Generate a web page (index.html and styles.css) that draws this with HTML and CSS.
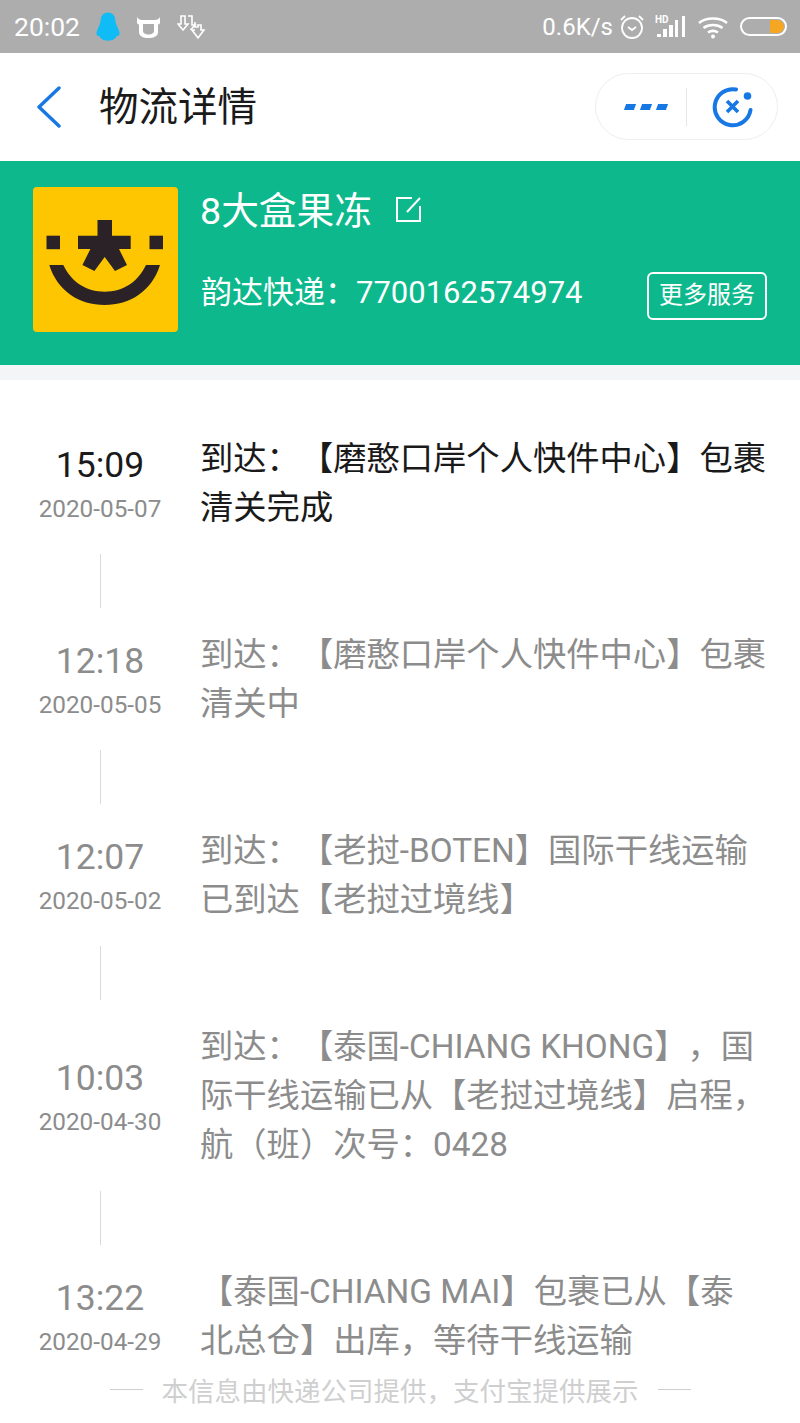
FILE: index.html
```html
<!DOCTYPE html>
<html lang="zh-CN">
<head>
  <meta charset="UTF-8" />
  <meta name="viewport" content="width=device-width, initial-scale=1.0" />
  <title>物流详情</title>
  <link rel="stylesheet" href="styles.css">
</head>
<body>
  <div class="status-bar">
    <div class="status-left">
      <span class="clock">20:02</span>
      <svg class="icon-qq" width="26" height="32" viewBox="0 0 26 32"><path d="M13 1.500c-5 0-7.500 4-7.500 9 0 3-4 8-4 12 0 2 1 3 2.500 2 .5 2 2 3 3.500 4 2 1.500 9 1.500 11 0 1.500-1 3-2 3.500-4 1.500 1 2.500 0 2.500-2 0-4-4-9-4-12 0-5-2.500-9-7.500-9z" fill="#10bcf5"/></svg>
      <svg class="icon-cow" width="26" height="26" viewBox="0 0 26 26"><path d="M1 3c1 2 3 3 5 3h13c2 0 4-1 5-3v6c-.5 1-1.500 1.500-2 1.500V18c0 4-4 6-9.500 6S3 22 3 18v-7.500C2.500 10.500 1.500 10 1 9z" fill="#fff"/><path d="M7 10h11v7c0 2-2.500 3.500-5.500 3.500S7 19 7 17z" fill="#adadad"/></svg>
      <svg class="icon-down" width="28" height="26" viewBox="0 0 28 26" fill="none" stroke="#fff" stroke-width="1.600"><path d="M4 2h4v8h3l-5 6-5-6h3zM11 2h4v9h3l-4.500 5"/><path d="M18 8v5h3v-2h3v5h3l-6 8-6-8h3"/></svg>
    </div>
    <div class="status-right">
      <span class="speed">0.6K/s</span>
      <svg width="26" height="26" viewBox="0 0 26 26" fill="none" stroke="#fff" stroke-width="1.800"><circle cx="13" cy="14" r="10"/><path d="M9 13l4 3 4-3"/><path d="M2 6l4-4M24 6l-4-4"/></svg>
      <svg width="32" height="26" viewBox="0 0 32 26"><text x="0" y="9" class="hd">HD</text><rect x="2" y="20" width="4" height="3" fill="#fff"/><rect x="8" y="15" width="4" height="8" fill="#fff"/><rect x="14" y="11" width="4" height="12" fill="#fff"/><rect x="20" y="6" width="3" height="17" fill="#fff"/><rect x="27" y="2" width="3" height="21" fill="#fff"/></svg>
      <svg width="32" height="26" viewBox="0 0 32 26" fill="none" stroke="#fff" stroke-width="2.600"><path d="M2 9c7-6 21-6 28 0M6.500 14c5-4 14-4 19 0M11 18.500c3-2 7-2 10 0"/><circle cx="16" cy="22.500" r="2" fill="#fff" stroke="none"/></svg>
      <span class="battery"><span class="battery-level"></span></span>
    </div>
  </div>

  <header class="nav-bar">
    <svg class="back" width="26" height="44" viewBox="0 0 26 44" fill="none" stroke="#1677e5" stroke-width="3.400" stroke-linecap="round" stroke-linejoin="round"><path d="M24 3L4 22l20 19"/></svg>
    <h1 class="nav-title">物流详情</h1>
    <div class="capsule">
      <div class="capsule-more"><i></i><i></i><i></i></div>
      <svg class="capsule-close" width="42" height="42" viewBox="0 0 42 42" fill="none" stroke="#1677e5"><path d="M24 3.500A18 18 0 1 0 38.500 24" stroke-width="4" stroke-linecap="round"/><path d="M15 15l11 11M26 15L15 26" stroke-width="3.600"/><circle cx="35.500" cy="10" r="3.800" fill="#1677e5" stroke="none"/></svg>
    </div>
  </header>

  <section class="summary">
    <svg class="logo" width="145" height="145" viewBox="0 0 145 145">
      <rect width="145" height="145" rx="4" fill="#fdc600"/>
      <rect x="13.500" y="48.700" width="13.500" height="13.500" fill="#2a2227"/>
      <rect x="116.500" y="48.700" width="13.500" height="13.500" fill="#2a2227"/>
      <path d="M64.500 33H79v15.700H97.700V62H86l8 16-12 6-10.300-14-10.300 14-12-6 8-16H45V48.700h19.500z" fill="#2a2227"/>
      <path d="M16.300 78h14c8 17 23 26.700 41.400 26.700S105 95 113 78h14c-8 26-30 40-55.300 40S24.300 104 16.300 78z" fill="#2a2227"/>
    </svg>
    <div class="summary-info">
      <div class="goods">
        <span>8大盒果冻</span>
        <svg class="edit" width="28" height="28" viewBox="0 0 28 28" fill="none" stroke="#fff" stroke-width="2"><path d="M17 3H2v23h23V11"/><path d="M12 17L25 3"/></svg>
      </div>
      <div class="waybill">
        <span>韵达快递：7700162574974</span>
        <span class="more-btn">更多服务</span>
      </div>
    </div>
  </section>

  <div class="divider"></div>

  <main class="timeline">
    <div class="event current">
      <div class="when"><div class="time">15:09</div><div class="date">2020-05-07</div></div>
      <div class="what">到达：【磨憨口岸个人快件中心】包裹清关完成</div>
    </div>
    <div class="link"></div>
    <div class="event">
      <div class="when"><div class="time">12:18</div><div class="date">2020-05-05</div></div>
      <div class="what">到达：【磨憨口岸个人快件中心】包裹清关中</div>
    </div>
    <div class="link"></div>
    <div class="event">
      <div class="when"><div class="time">12:07</div><div class="date">2020-05-02</div></div>
      <div class="what">到达：【老挝-BOTEN】国际干线运输已到达【老挝过境线】</div>
    </div>
    <div class="link"></div>
    <div class="event">
      <div class="when"><div class="time">10:03</div><div class="date">2020-04-30</div></div>
      <div class="what">到达：【泰国-CHIANG KHONG】，国际干线运输已从【老挝过境线】启程，航（班）次号：0428</div>
    </div>
    <div class="link"></div>
    <div class="event">
      <div class="when"><div class="time">13:22</div><div class="date">2020-04-29</div></div>
      <div class="what">【泰国-CHIANG MAI】包裹已从【泰<br>北总仓】出库，等待干线运输</div>
    </div>
  </main>

  <footer class="source">
    <span class="dash"></span>
    <span>本信息由快递公司提供，支付宝提供展示</span>
    <span class="dash"></span>
  </footer>
</body>
</html>
```

FILE: styles.css
```css
* {
  margin: 0;
  padding: 0;
  box-sizing: border-box;
}

body {
  position: relative;
  height: 1423px;
  overflow: hidden;
  background: #fff;
  color: #1a1a1a;
  font-family: Roboto, "Noto Sans CJK SC", sans-serif;
  text-spacing-trim: space-all;
}

/* status bar */
.status-bar {
  height: 53px;
  background: #adadad;
  color: #fff;
  display: flex;
  align-items: center;
  justify-content: space-between;
  padding: 0 13px 0 14px;
}

.status-left, .status-right {
  display: flex;
  align-items: center;
}

.clock {
  font-size: 26.500px;
  width: 81px;
}

.icon-cow {
  margin-left: 15px;
}

.icon-down {
  margin-left: 15px;
}

.speed {
  font-size: 24px;
  margin-right: 6px;
}

.status-right svg {
  margin-right: 10px;
}

.hd {
  font-size: 10px;
  font-weight: 700;
  fill: #fff;
}

.battery {
  width: 47px;
  height: 19px;
  padding: 1px;
  border: 2px solid #fff;
  border-radius: 10px;
  display: flex;
  justify-content: flex-end;
  margin-left: 1px;
}

.battery-level {
  width: 14px;
  background: #f5a623;
  border-radius: 0 7px 7px 0;
}

/* title */
.nav-bar {
  height: 108px;
  display: flex;
  align-items: center;
  padding: 0 22px 0 35px;
}

.nav-title {
  font-size: 39.500px;
  font-weight: 400;
  margin: 0 0 8px 38px;
  flex: 1;
}

.capsule {
  width: 183px;
  height: 67px;
  border: 1px solid #eeeeee;
  border-radius: 34px;
  display: flex;
  align-items: center;
  margin-bottom: 1px;
}

.capsule-more {
  width: 91px;
  height: 38px;
  border-right: 1px solid #e6e6e6;
  display: flex;
  align-items: center;
  justify-content: flex-end;
  gap: 6px;
  padding-right: 19px;
}

.capsule-more i {
  width: 10px;
  height: 6px;
  background: #1677e5;
  transform: skewX(-20deg);
}

.capsule-close {
  margin-left: 25px;
}

/* summary */
.summary {
  height: 204px;
  background: #0db88c;
  color: #fff;
  display: flex;
  padding: 26px 33px 0;
}

.summary-info {
  flex: 1;
  margin-left: 22px;
}

.goods {
  display: flex;
  align-items: center;
  gap: 23px;
  height: 46px;
  margin-top: -3px;
  font-size: 37.700px;
}

.edit {
  margin-top: 4px;
}

.waybill {
  display: flex;
  align-items: center;
  justify-content: space-between;
  height: 48px;
  margin-top: 35px;
  padding-left: 1px;
  font-size: 31px;
}

.more-btn {
  width: 120px;
  height: 48px;
  margin-top: 14px;
  border: 2px solid #fff;
  border-radius: 6px;
  font-size: 24px;
  line-height: 42px;
  text-align: center;
}

.divider {
  height: 15px;
  background: #f4f5f7;
}

/* events */
.timeline {
  padding: 54px 33px 0 0;
}

.event {
  display: flex;
  align-items: center;
  color: #8c8c8c;
}

.event.current {
  color: #1a1a1a;
}

.when {
  width: 200px;
  padding-top: 7px;
  text-align: center;
}

.time {
  font-size: 35.500px;
  line-height: 44px;
}

.date {
  margin-top: 1px;
  font-size: 24.300px;
  line-height: 42px;
  color: #8c8c8c;
}

.what {
  flex: 1;
  font-size: 33.300px;
  line-height: 49px;
}

.link {
  width: 1px;
  height: 54px;
  margin: 22px 0 22px 100px;
  background: #d9d9d9;
}

/* overlays the end of the list */
.source {
  position: absolute;
  left: 0;
  right: 0;
  bottom: 0;
  height: 68px;
  display: flex;
  align-items: center;
  justify-content: center;
  gap: 19px;
  font-size: 26.500px;
  color: #cfcfcf;
}

.dash {
  width: 33px;
  height: 1px;
  background: #cfcfcf;
}
```
